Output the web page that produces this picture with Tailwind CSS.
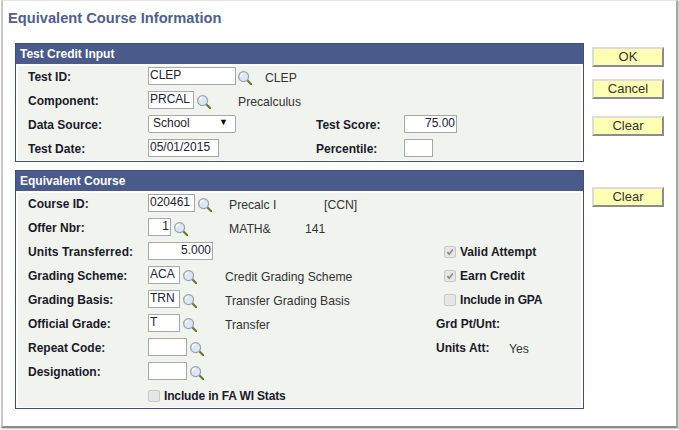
<!DOCTYPE html>
<html>
<head>
<meta charset="utf-8">
<script src="https://cdn.jsdelivr.net/npm/@tailwindcss/browser@4"></script>
</head>
<body class="bg-white">
<svg class="hidden"><defs><symbol id="mag" viewBox="0 0 14 14"><path d="M8.8 8.8 L13.2 13.2" stroke="#6f6f38" stroke-width="2" stroke-linecap="round"/><circle cx="5.6" cy="5.6" r="5" fill="#d8e8f4" stroke="#9aa4a8" stroke-width="1.2"/><path d="M2.6 5.4 A3 3 0 0 1 5.4 2.5" stroke="#fff" stroke-width="1.3" fill="none"/></symbol><symbol id="chk" viewBox="0 0 12 12"><path d="M2.8 6.2 L5 8.6 L9.4 3" stroke="#8a8a8a" stroke-width="2" fill="none"/></symbol></defs></svg>
<div class="w-[679px] h-[430px] font-['Liberation_Sans',Arial,sans-serif] text-[12px] text-[#333] overflow-hidden">
<div class="ml-[1px] w-[677px] h-[428px] border-l-2 border-r-2 border-t border-b-2 border-l-[#c8c8c8] border-r-[#a8a8a8] border-t-[#e4e4e4] border-b-[#8c8c8c] bg-white pt-[9px] pl-[5px] shadow-[1px_1px_1px_#d0d0d0]">
<h1 class="text-[14.67px] leading-[16px] font-bold text-[#50608c] h-[33px]">Equivalent Course Information</h1>
<div class="flex ml-[7px]">
<div class="w-[569px]">
<section class="border border-[#3f5080]">
<div class="h-[20px] bg-[#4a5a8a] text-white font-bold leading-[20px] pl-[4px]">Test Credit Input</div>
<div class="m-[2px] mb-[1px] bg-[#f1f3ef] pt-px pb-[3px] flex flex-col gap-[6px] text-[#222] [&_b]:pt-[2px] [&_b]:text-[#1a1a2a] [&_svg]:mt-[3px] [&_svg]:w-[14px] [&_svg]:h-[14px] [&_span]:text-[12.2px]">
<div class="flex h-[18px] items-center"><b class="w-[130px] pl-[10px]">Test ID:</b><input value="CLEP" class="w-[88px] h-[18px] border border-[#a8a8a8] bg-white px-px pb-[2px] text-[12px] text-[#223]"><svg class="ml-[2px]"><use href="#mag"/></svg><span class="ml-[13px] pt-[4px] text-[#333]">CLEP</span></div>
<div class="flex h-[18px] items-center"><b class="w-[130px] pl-[10px]">Component:</b><input value="PRCAL" class="w-[46px] h-[18px] border border-[#a8a8a8] bg-white px-px pb-[2px] text-[12px] text-[#223]"><svg class="ml-[3px]"><use href="#mag"/></svg><span class="ml-[27px] pt-[4px] text-[#333]">Precalculus</span></div>
<div class="flex h-[18px] items-center"><b class="w-[130px] pl-[10px]">Data Source:</b><div class="w-[88px] h-[18px] border border-[#a8a8a8] rounded-[2px] bg-white pl-[4px] pr-[7px] flex justify-between items-center pb-[2px] text-[#223]"><em class="not-italic">School</em><em class="not-italic text-[9px] text-black">▼</em></div><b class="ml-[80px] w-[88px]">Test Score:</b><input value="75.00" class="w-[53px] h-[18px] border border-[#a8a8a8] bg-white px-px pb-[2px] text-right text-[12px] text-[#223]"></div>
<div class="flex h-[18px] items-center"><b class="w-[130px] pl-[10px]">Test Date:</b><input value="05/01/2015" class="w-[71px] h-[18px] border border-[#a8a8a8] bg-white px-px pb-[2px] text-[12px] text-[#223]"><b class="ml-[97px] w-[88px]">Percentile:</b><input class="w-[29px] h-[18px] border border-[#a8a8a8] bg-white"></div>
</div>
</section>
<section class="border border-[#3f5080] mt-[8px]">
<div class="h-[20px] bg-[#4a5a8a] text-white font-bold leading-[20px] pl-[4px]">Equivalent Course</div>
<div class="m-[2px] mb-[1px] bg-[#f1f3ef] pt-px pb-[3px] flex flex-col gap-[6px] text-[#222] [&_b]:pt-[2px] [&_b]:text-[#1a1a2a] [&>div>svg]:mt-[3px] [&>div>svg]:w-[14px] [&>div>svg]:h-[14px] [&_span]:text-[12.2px] [&_span]:pt-[4px]">
<div class="flex h-[18px] items-center"><b class="w-[130px] pl-[10px]">Course ID:</b><input value="020461" class="w-[47px] h-[18px] border border-[#a8a8a8] bg-white px-px pb-[2px] text-[12px] text-[#223]"><svg class="ml-[3px]"><use href="#mag"/></svg><span class="ml-[17px] w-[95px] text-[#333]">Precalc I</span><span class="text-[#333]">[CCN]</span></div>
<div class="flex h-[18px] items-center"><b class="w-[130px] pl-[10px]">Offer Nbr:</b><input value="1" class="w-[23px] h-[18px] border border-[#a8a8a8] bg-white px-px pb-[2px] text-right text-[12px] text-[#223]"><svg class="ml-[3px]"><use href="#mag"/></svg><span class="ml-[41px] w-[76px] text-[#333]">MATH&amp;</span><span class="text-[#333]">141</span></div>
<div class="flex h-[18px] items-center"><b class="w-[130px] pl-[10px] tracking-[0.1px]">Units Transferred:</b><input value="5.000" class="w-[65px] h-[18px] border border-[#a8a8a8] bg-white px-px pb-[2px] text-right text-[12px] text-[#223]"><i class="ml-[231px] mr-[4px] mt-[2px] w-[12px] h-[12px] rounded-[2px] border border-[#c8c8c8] bg-[#e6e6e6] block"><svg class="w-[10px] h-[10px]"><use href="#chk"/></svg></i><b>Valid Attempt</b></div>
<div class="flex h-[18px] items-center"><b class="w-[130px] pl-[10px]">Grading Scheme:</b><input value="ACA" class="w-[32px] h-[18px] border border-[#a8a8a8] bg-white px-px pb-[2px] text-[12px] text-[#223]"><svg class="ml-[3px]"><use href="#mag"/></svg><span class="ml-[28px] w-[219px] text-[#333]">Credit Grading Scheme</span><i class="mr-[4px] mt-[2px] w-[12px] h-[12px] rounded-[2px] border border-[#c8c8c8] bg-[#e6e6e6] block"><svg class="w-[10px] h-[10px]"><use href="#chk"/></svg></i><b>Earn Credit</b></div>
<div class="flex h-[18px] items-center"><b class="w-[130px] pl-[10px]">Grading Basis:</b><input value="TRN" class="w-[32px] h-[18px] border border-[#a8a8a8] bg-white px-px pb-[2px] text-[12px] text-[#223]"><svg class="ml-[3px]"><use href="#mag"/></svg><span class="ml-[28px] w-[219px] text-[#333]">Transfer Grading Basis</span><i class="mr-[4px] mt-[2px] w-[12px] h-[12px] rounded-[2px] border border-[#c8c8c8] bg-[#e6e6e6] block"></i><b class="tracking-[-0.15px]">Include in GPA</b></div>
<div class="flex h-[18px] items-center"><b class="w-[130px] pl-[10px]">Official Grade:</b><input value="T" class="w-[32px] h-[18px] border border-[#a8a8a8] bg-white px-px pb-[2px] text-[12px] text-[#223]"><svg class="ml-[3px]"><use href="#mag"/></svg><span class="ml-[28px] w-[211px] text-[#333]">Transfer</span><b>Grd Pt/Unt:</b></div>
<div class="flex h-[18px] items-center"><b class="w-[130px] pl-[10px]">Repeat Code:</b><input class="w-[39px] h-[18px] border border-[#a8a8a8] bg-white"><svg class="ml-[3px]"><use href="#mag"/></svg><span class="w-[232px]"></span><b class="w-[73px]">Units Att:</b><span class="text-[#333]">Yes</span></div>
<div class="flex h-[18px] items-center"><b class="w-[130px] pl-[10px]">Designation:</b><input class="w-[39px] h-[18px] border border-[#a8a8a8] bg-white"><svg class="ml-[3px]"><use href="#mag"/></svg></div>
<div class="flex h-[18px] items-center pl-[130px]"><i class="mr-[4px] mt-[2px] w-[12px] h-[12px] rounded-[2px] border border-[#c8c8c8] bg-[#e6e6e6] block"></i><b class="tracking-[-0.15px]">Include in FA WI Stats</b></div>
</div>
</section>
</div>
<div class="ml-[8px] w-[72px] flex flex-col">
<button class="mt-[4px] h-[20px] border-2 border-t-[#dcdcdc] border-l-[#dcdcdc] border-r-[#8c8c8c] border-b-[#8c8c8c] bg-[#ffffb4] text-[13px] leading-[14px] text-[#333]">OK</button>
<button class="mt-[12px] h-[20px] border-2 border-t-[#dcdcdc] border-l-[#dcdcdc] border-r-[#8c8c8c] border-b-[#8c8c8c] bg-[#ffffb4] text-[13px] leading-[14px] text-[#333]">Cancel</button>
<button class="mt-[17px] h-[20px] border-2 border-t-[#dcdcdc] border-l-[#dcdcdc] border-r-[#8c8c8c] border-b-[#8c8c8c] bg-[#ffffb4] text-[13px] leading-[14px] text-[#333]">Clear</button>
<button class="mt-[51px] h-[20px] border-2 border-t-[#dcdcdc] border-l-[#dcdcdc] border-r-[#8c8c8c] border-b-[#8c8c8c] bg-[#ffffb4] text-[13px] leading-[14px] text-[#333]">Clear</button>
</div>
</div>
</div>
</div>
</body>
</html>
